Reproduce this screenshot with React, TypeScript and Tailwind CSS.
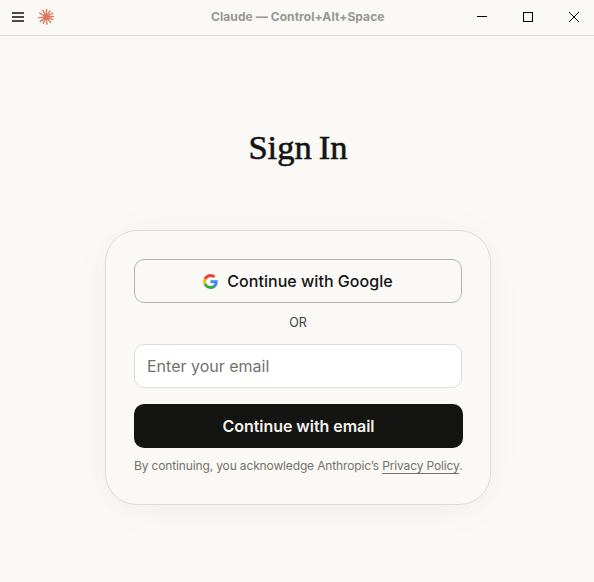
const TitleBar = () => {
  return (
    <header className="relative flex h-9 items-center border-b border-[#dfdeda] pb-0.5">
      <button className="ml-3 flex w-3 flex-col gap-0.5" aria-label="Menu">
        <span className="h-0.5 w-full bg-[#4b4a46]" />
        <span className="h-0.5 w-full bg-[#4b4a46]" />
        <span className="h-0.5 w-full bg-[#4b4a46]" />
      </button>
      <svg className="ml-3.5 size-4" viewBox="0 0 16 16" stroke="#d97757" strokeWidth="1.4" strokeLinecap="round">
        <path d="M8 8 8.7.8M8 8 12 1.9M8 8 14.6 4.2M8 8 15.4 7.5M8 8 14.8 10.6M8 8 12.8 13.6M8 8 9 15.2M8 8 5.2 14.4M8 8 2.2 12.6M8 8 .6 8.6M8 8 1.7 4M8 8 5 1.4" />
      </svg>
      <div className="absolute left-[211px] top-[9px] text-[12px] leading-4 font-bold tracking-[0.08px] whitespace-nowrap text-[#979692]">
        Claude — Control+Alt+Space
      </div>
      <div className="ml-auto flex">
        <button className="flex h-8 w-[46px] items-center justify-center" aria-label="Minimize">
          <svg width="10" height="10" shapeRendering="crispEdges">
            <path d="M0 4h10v1H0z" fill="#000" />
          </svg>
        </button>
        <button className="flex h-8 w-[46px] items-center justify-center" aria-label="Maximize">
          <svg width="10" height="10" shapeRendering="crispEdges">
            <path d="M.5.5h9v9h-9z" fill="none" stroke="#000" />
          </svg>
        </button>
        <button className="mr-[-3px] flex h-8 w-[46px] items-center justify-center" aria-label="Close">
          <svg width="10" height="10" shapeRendering="crispEdges">
            <path d="M0 0l10 10M10 0L0 10" stroke="#000" />
          </svg>
        </button>
      </div>
    </header>
  );
};

const GoogleIcon = () => {
  return (
    <svg className="size-[15px]" viewBox="0 0 48 48">
      <path fill="#EA4335" d="M24 9.5c3.54 0 6.71 1.22 9.21 3.6l6.85-6.85C35.9 2.38 30.47 0 24 0 14.62 0 6.51 5.38 2.56 13.22l7.98 6.19C12.43 13.72 17.74 9.5 24 9.5z" />
      <path fill="#4285F4" d="M46.98 24.55c0-1.57-.15-3.09-.38-4.55H24v9.02h12.94c-.58 2.96-2.26 5.48-4.78 7.18l7.73 6c4.51-4.18 7.09-10.36 7.09-17.65z" />
      <path fill="#FBBC05" d="M10.53 28.59c-.48-1.45-.76-2.99-.76-4.59s.27-3.14.76-4.59l-7.98-6.19C.92 16.46 0 20.12 0 24c0 3.88.92 7.54 2.56 10.78l7.97-6.19z" />
      <path fill="#34A853" d="M24 48c6.48 0 11.93-2.13 15.89-5.81l-7.73-6c-2.15 1.45-4.92 2.3-8.16 2.3-6.26 0-11.57-4.22-13.47-9.91l-7.98 6.19C6.51 42.62 14.62 48 24 48z" />
    </svg>
  );
};

const App = () => {
  return (
    <div className="h-screen overflow-hidden bg-[#faf9f5] font-['Inter','Noto_Sans',sans-serif] text-[#141413]">
      <TitleBar />
      <main className="flex flex-col items-center pl-0.5">
        <h1 className="mt-[91px] font-['Liberation_Serif',serif] text-[34.5px] leading-10 [word-spacing:-1.5px] [-webkit-text-stroke:0.6px_#141413]">
          Sign In
        </h1>
        <section className="mt-[63px] h-[275px] w-[386px] rounded-[32px] border border-[#dcdbd7] bg-[#faf9f5] px-7 pt-7 shadow-[0_4px_24px_rgba(0,0,0,0.02),0_4px_48px_rgba(0,0,0,0.03)]">
          <button className="flex h-11 w-full items-center justify-center gap-[9px] rounded-[10px] border border-[#b5b4b0] text-[16px] font-[450] tracking-[0.03px]">
            <GoogleIcon />
            Continue with Google
          </button>
          <div className="mt-3 text-center text-[12.5px] leading-4 text-[#3d3d3a]">OR</div>
          <input
            className="mt-[13px] block h-11 w-full rounded-[10px] border border-[#dddcda] bg-white px-3 text-[16px] placeholder:text-[#73726c]"
            placeholder="Enter your email"
          />
          <button className="mt-4 h-11 w-[329px] rounded-[10px] bg-[#141413] text-[16px] font-semibold tracking-[-0.04px] text-[#f3f2ee]">
            Continue with email
          </button>
          <p className="mt-2.5 text-[12px] leading-4 tracking-[-0.14px] whitespace-nowrap text-[#73726c]">
            By continuing, you acknowledge Anthropic’s{" "}
            <a className="underline underline-offset-[3px]">Privacy Policy</a>.
          </p>
        </section>
      </main>
    </div>
  );
};

export default App;
